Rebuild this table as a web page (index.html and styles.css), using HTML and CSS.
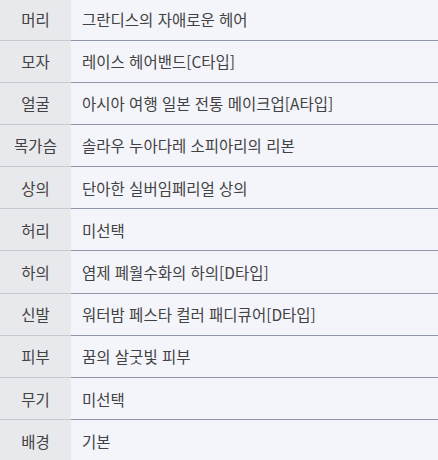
FILE: index.html
```html
<!DOCTYPE html>
<html lang="ko">
<head>
<meta charset="utf-8">
<link rel="stylesheet" href="styles.css">
</head>
<body>
<div class="table">
  <div class="th">머리</div><div class="td">그란디스의 자애로운 헤어</div>
  <div class="th">모자</div><div class="td">레이스 헤어밴드[C타입]</div>
  <div class="th">얼굴</div><div class="td">아시아 여행 일본 전통 메이크업[A타입]</div>
  <div class="th">목가슴</div><div class="td">솔라우 누아다레 소피아리의 리본</div>
  <div class="th">상의</div><div class="td">단아한 실버임페리얼 상의</div>
  <div class="th">허리</div><div class="td">미선택</div>
  <div class="th">하의</div><div class="td">염제 폐월수화의 하의[D타입]</div>
  <div class="th">신발</div><div class="td">워터밤 페스타 컬러 패디큐어[D타입]</div>
  <div class="th">피부</div><div class="td">꿈의 살굿빛 피부</div>
  <div class="th">무기</div><div class="td">미선택</div>
  <div class="th">배경</div><div class="td">기본</div>
</div>
</body>
</html>
```
FILE: styles.css
```css
html, body {
  margin: 0;
  padding: 0;
  background: #f4f5fa;
}
body {
  font-family: "Noto Sans CJK KR", "Noto Sans", sans-serif;
  font-size: 15.5px;
  color: #424242;
  overflow: hidden;
}
.table {
  display: grid;
  grid-template-columns: 71px 1fr;
  margin-top: -1.7px;
}
.th, .td {
  height: 42.2px;
  box-sizing: border-box;
  display: flex;
  align-items: center;
  white-space: nowrap;
}
.th {
  background: #e8e9ed;
  justify-content: center;
  border-bottom: 1px solid #c9cacf;
}
.td {
  background: #f4f5fa;
  padding-left: 11px;
  border-bottom: 1px solid #8f97ab;
}
```
